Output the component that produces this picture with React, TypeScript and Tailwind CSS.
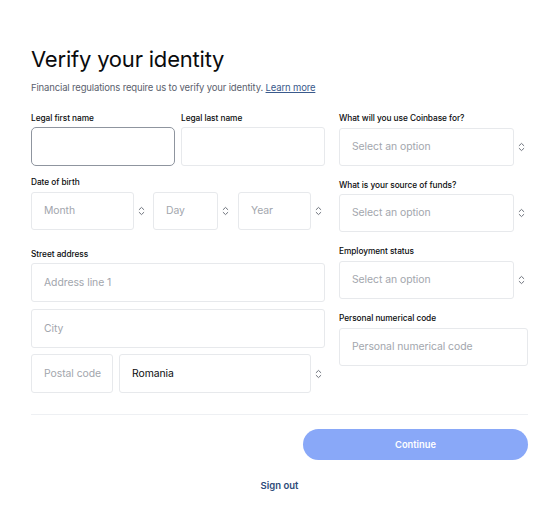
import React from 'react';

function Chevrons() {
  return (
    <svg width="7" height="10" viewBox="0 0 7 10" fill="none" stroke="#6f747d" strokeWidth="1" strokeLinecap="round" strokeLinejoin="round">
      <path d="M1.2 3.6 L3.5 1.4 L5.8 3.6" />
      <path d="M1.2 6.4 L3.5 8.6 L5.8 6.4" />
    </svg>
  );
}

function Label({ children }: { children: React.ReactNode }) {
  return <div className="text-[8.3px] leading-[12px] font-medium tracking-[-0.05px] text-[#0a0b0d]">{children}</div>;
}

function Box({ width, height = 'h-[38px]', text, filled = false, focused = false }: { width: string; height?: string; text?: string; filled?: boolean; focused?: boolean }) {
  return (
    <div
      className={`${width} ${height} flex items-center px-[12px] text-[10.4px] tracking-[-0.05px] whitespace-nowrap bg-white ${
        focused ? 'border border-[#8f959f] rounded-[5px]' : 'border border-[#e7e9ec] rounded-[3px]'
      } ${filled ? 'text-[#0a0b0d]' : 'text-[#a2a6ad]'}`}
    >
      {text}
    </div>
  );
}

function Select({ boxWidth, text, filled = false, height }: { boxWidth: string; text: string; filled?: boolean; height?: string }) {
  return (
    <div className="flex items-center">
      <Box width={boxWidth} text={text} filled={filled} height={height} />
      <div className="w-[14px] flex justify-center">
        <Chevrons />
      </div>
    </div>
  );
}

export default function App() {
  return (
    <div className="min-h-screen w-[556px] bg-white px-[31px] pt-[45px] font-['Inter',sans-serif] text-[#0a0b0d]">
      <h1 className="text-[22px] leading-[28px] font-normal tracking-[-0.2px]">Verify your identity</h1>
      <p className="mt-[8px] text-[9.5px] leading-[14px] tracking-[-0.15px] text-[#5b616e]">
        Financial regulations require us to verify your identity.{' '}
        <span className="text-[#3a5a8c] underline">Learn more</span>
      </p>

      <div className="mt-[17px] flex gap-[14px]">
        {/* left column */}
        <div className="w-[294px]">
          <div className="flex gap-[6px]">
            <div>
              <Label>Legal first name</Label>
              <div className="mt-[3px]">
                <Box width="w-[144px]" height="h-[39px]" focused />
              </div>
            </div>
            <div>
              <Label>Legal last name</Label>
              <div className="mt-[3px]">
                <Box width="w-[144px]" height="h-[39px]" />
              </div>
            </div>
          </div>

          <div className="mt-[10px]">
            <Label>Date of birth</Label>
            <div className="mt-[4px] flex">
              <Select boxWidth="w-[103px]" text="Month" />
              <div className="ml-[5px]">
                <Select boxWidth="w-[65px]" text="Day" />
              </div>
              <div className="ml-[6px]">
                <Select boxWidth="w-[73px]" text="Year" />
              </div>
            </div>
          </div>

          <div className="mt-[18px]">
            <Label>Street address</Label>
            <div className="mt-[3px]">
              <Box width="w-[294px]" height="h-[39px]" text="Address line 1" />
            </div>
            <div className="mt-[7px]">
              <Box width="w-[294px]" height="h-[39px]" text="City" />
            </div>
            <div className="mt-[6px] flex gap-[6px]">
              <Box width="w-[82px]" height="h-[39px]" text="Postal code" />
              <Select boxWidth="w-[192px]" height="h-[39px]" text="Romania" filled />
            </div>
          </div>
        </div>

        {/* right column */}
        <div className="w-[189px]">
          <Label>What will you use Coinbase for?</Label>
          <div className="mt-[4px]">
            <Select boxWidth="w-[175px]" text="Select an option" />
          </div>

          <div className="mt-[13px]">
            <Label>What is your source of funds?</Label>
            <div className="mt-[3px]">
              <Select boxWidth="w-[175px]" text="Select an option" />
            </div>
          </div>

          <div className="mt-[13px]">
            <Label>Employment status</Label>
            <div className="mt-[4px]">
              <Select boxWidth="w-[175px]" text="Select an option" />
            </div>
          </div>

          <div className="mt-[13px]">
            <Label>Personal numerical code</Label>
            <div className="mt-[4px]">
              <Box width="w-[189px]" text="Personal numerical code" />
            </div>
          </div>
        </div>
      </div>

      <div className="mt-[21px] w-[497px] border-t border-[#eef0f3]" />

      <div className="mt-[14px] w-[497px] flex justify-end">
        <button className="w-[225px] h-[31px] rounded-full bg-[#89a8f8] text-white text-[9.3px] font-semibold">
          Continue
        </button>
      </div>

      <div className="mt-[19px] w-[497px] text-center text-[9.5px] leading-[14px] font-semibold text-[#2d4a79]">
        Sign out
      </div>
    </div>
  );
}
